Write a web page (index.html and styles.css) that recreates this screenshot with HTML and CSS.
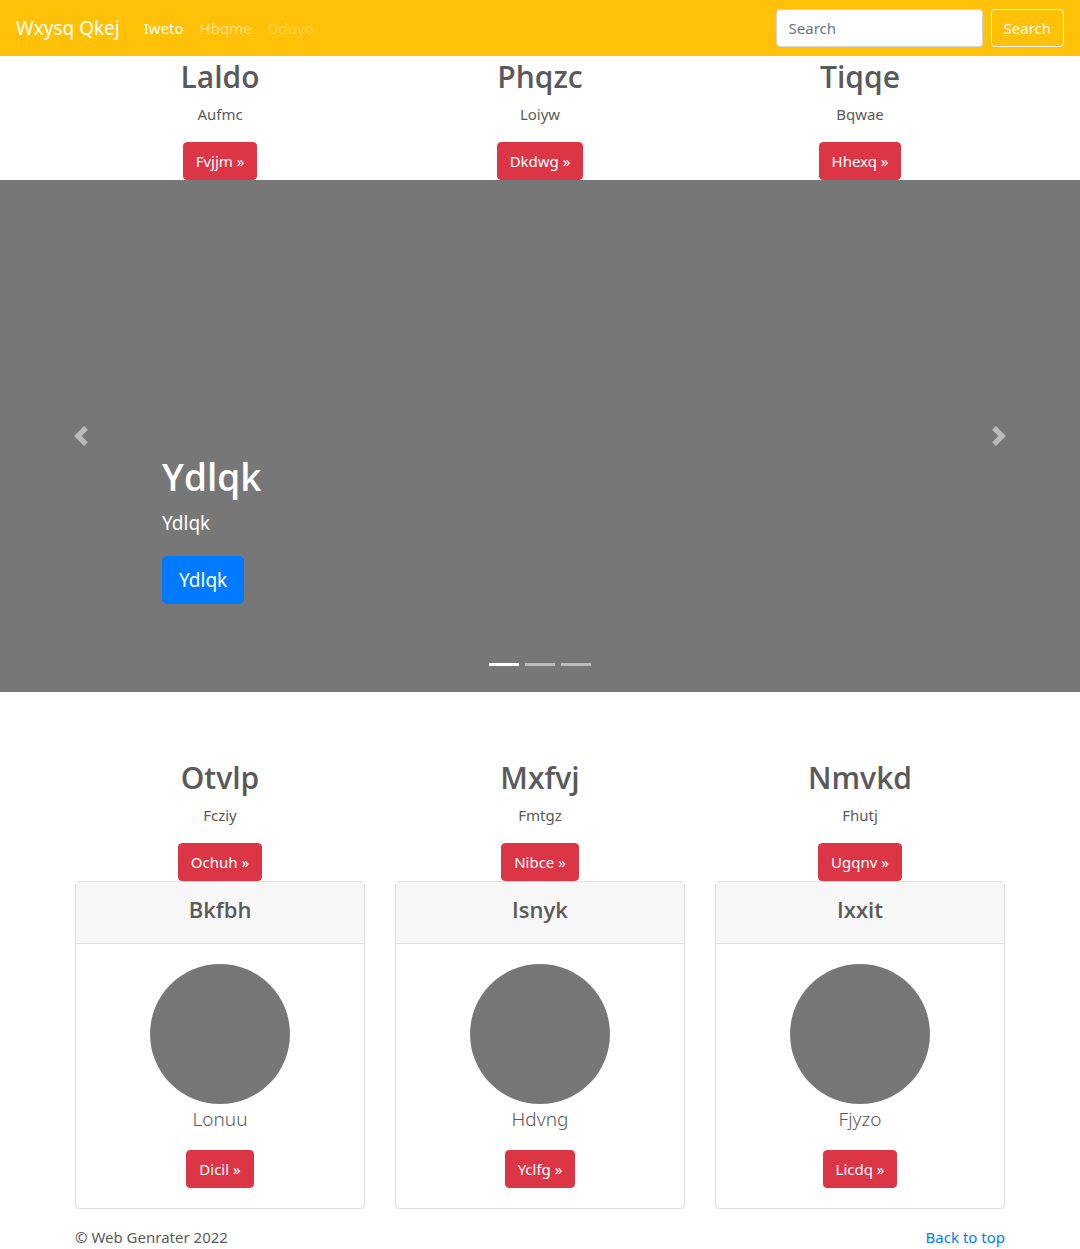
FILE: index.html
```html
<!DOCTYPE html>
<html lang="en">
<head>
<meta charset="utf-8">
<meta name="viewport" content="width=device-width, initial-scale=1">
<title>Wxysq Qkej</title>
<link rel="stylesheet" href="styles.css">
</head>
<body>
<header class="navbar" id="top">
  <a class="brand" href="#">Wxysq Qkej</a>
  <nav class="nav-links">
    <a class="nav-link active" href="#">Iweto</a>
    <a class="nav-link" href="#">Hbqme</a>
    <a class="nav-link disabled" href="#" aria-disabled="true">Dduyo</a>
  </nav>
  <form class="search">
    <input class="search-input" type="search" placeholder="Search" aria-label="Search">
    <button class="btn btn-outline" type="submit">Search</button>
  </form>
</header>
<main>
  <section class="container row">
    <div class="feature"><h2>Laldo</h2><p>Aufmc</p><a class="btn btn-danger" href="#">Fvjjm »</a></div>
    <div class="feature"><h2>Phqzc</h2><p>Loiyw</p><a class="btn btn-danger" href="#">Dkdwg »</a></div>
    <div class="feature"><h2>Tiqqe</h2><p>Bqwae</p><a class="btn btn-danger" href="#">Hhexq »</a></div>
  </section>

  <section class="carousel" aria-label="Slides">
    <button class="control" type="button" aria-label="Previous">
      <svg width="20" height="20" viewBox="0 0 8 8" fill="#fff"><path d="M5.25 0l-4 4 4 4 1.5-1.5L4.25 4l2.5-2.5L5.25 0z"/></svg>
    </button>
    <div class="caption">
      <h1>Ydlqk</h1>
      <p>Ydlqk</p>
      <a class="btn btn-primary" href="#">Ydlqk</a>
    </div>
    <button class="control" type="button" aria-label="Next">
      <svg width="20" height="20" viewBox="0 0 8 8" fill="#fff"><path d="M2.75 0l-1.5 1.5L3.75 4l-2.5 2.5L2.75 8l4-4-4-4z"/></svg>
    </button>
    <div class="indicators">
      <button class="indicator current" type="button" aria-label="Slide 1"></button>
      <button class="indicator" type="button" aria-label="Slide 2"></button>
      <button class="indicator" type="button" aria-label="Slide 3"></button>
    </div>
  </section>

  <section class="container row">
    <div class="feature"><h2>Otvlp</h2><p>Fcziy</p><a class="btn btn-danger" href="#">Ochuh »</a></div>
    <div class="feature"><h2>Mxfvj</h2><p>Fmtgz</p><a class="btn btn-danger" href="#">Nibce »</a></div>
    <div class="feature"><h2>Nmvkd</h2><p>Fhutj</p><a class="btn btn-danger" href="#">Ugqnv »</a></div>
  </section>

  <section class="container row">
    <article class="card">
      <div class="card-header"><h4>Bkfbh</h4></div>
      <div class="card-body"><div class="avatar"></div><p>Lonuu</p><a class="btn btn-danger" href="#">Dicil »</a></div>
    </article>
    <article class="card">
      <div class="card-header"><h4>Isnyk</h4></div>
      <div class="card-body"><div class="avatar"></div><p>Hdvng</p><a class="btn btn-danger" href="#">Yclfg »</a></div>
    </article>
    <article class="card">
      <div class="card-header"><h4>Ixxit</h4></div>
      <div class="card-body"><div class="avatar"></div><p>Fjyzo</p><a class="btn btn-danger" href="#">Licdq »</a></div>
    </article>
  </section>
</main>
<footer class="container footer">
  <span>© Web Genrater 2022</span>
  <a href="#top">Back to top</a>
</footer>
</body>
</html>
```
FILE: styles.css
```css
*, *::before, *::after { box-sizing: border-box; }

body {
  margin: 0;
  background: #fff;
  color: #5a5a5a;
  font-family: "Segoe UI", "Noto Sans", "Open Sans", sans-serif;
  font-size: 15px;
  line-height: 24px;
}

h1, h2, h4 {
  margin: 0;
  font-family: "Segoe UI", "Open Sans", "Noto Sans", sans-serif;
  font-weight: 600;
}
h1 { padding-bottom: 8px; font-size: 37px; line-height: 46px; }
h2 { padding-bottom: 4px; font-size: 30px; line-height: 42px; }
h4 { padding-bottom: 6px; font-size: 22px; line-height: 31px; }
p { margin: 0 0 16px; }
a { color: #007bff; text-decoration: none; }

.btn {
  display: inline-block;
  padding: 6px 12px;
  border: 1px solid transparent;
  border-radius: 4px;
  background: transparent;
  color: #fff;
  font: inherit;
  text-align: center;
  vertical-align: top;
  cursor: pointer;
}
.btn-danger { background: #dc3545; border-color: #dc3545; }
.btn-outline { border-color: #f8f9fa; color: #f8f9fa; }
.btn-primary {
  padding: 8px 16px;
  border-color: #007bff;
  border-radius: 5px;
  background: #007bff;
  font-size: 19px;
  line-height: 30px;
}

.navbar {
  display: flex;
  align-items: center;
  min-height: 56px;
  padding: 8px 16px;
  background: #ffc107;
}
.brand { margin-right: 16px; color: #fff; font-size: 19px; line-height: 30px; }
.nav-links { display: flex; flex: 1; }
.nav-link { padding: 8px; color: rgba(255, 255, 255, .5); }
.nav-link.active { color: #fff; }
.nav-link.disabled { color: rgba(255, 255, 255, .25); }
.search { display: flex; gap: 8px; }
.search-input {
  width: 207px;
  height: 38px;
  padding: 6px 12px;
  border: 1px solid #ced4da;
  border-radius: 4px;
  background: #fff;
  color: #495057;
  font: inherit;
  appearance: none;
}
.search-input::placeholder { color: #6c757d; opacity: 1; }

.container {
  width: 100%;
  max-width: 960px;
  margin: 0 auto;
  padding: 0 15px;
}
.row { display: grid; grid-template-columns: repeat(3, 1fr); gap: 30px; }
.feature { text-align: center; }

.carousel {
  position: relative;
  display: grid;
  grid-template-columns: 15% 1fr 15%;
  min-height: 512px;
  margin-bottom: 65px;
  background: #777;
  color: #fff;
}
.control {
  display: flex;
  align-items: center;
  justify-content: center;
  padding: 0;
  border: 0;
  background: none;
  opacity: .5;
  cursor: pointer;
}
.caption { align-self: end; padding-bottom: 88px; }
.caption p { margin-bottom: 18px; font-size: 19px; line-height: 30px; }
.indicators {
  position: absolute;
  right: 15%;
  bottom: 26px;
  left: 15%;
  display: flex;
  justify-content: center;
  gap: 6px;
}
.indicator {
  width: 30px;
  height: 3px;
  padding: 0;
  border: 0;
  background: #fff;
  opacity: .5;
}
.indicator.current { opacity: 1; }

.card {
  border: 1px solid #dfdfdf;
  border-radius: 4px;
  text-align: center;
}
.card-header {
  padding: 12px 20px;
  border-bottom: 1px solid #dfdfdf;
  background: #f7f7f7;
}
.card-body { padding: 20px; }
.card-body p { font-size: 19px; font-weight: 300; line-height: 30px; }
.avatar {
  width: 140px;
  height: 140px;
  margin: 0 auto;
  border-radius: 50%;
  background: #777;
}

.footer { display: flex; justify-content: space-between; padding-top: 16px; }
```
